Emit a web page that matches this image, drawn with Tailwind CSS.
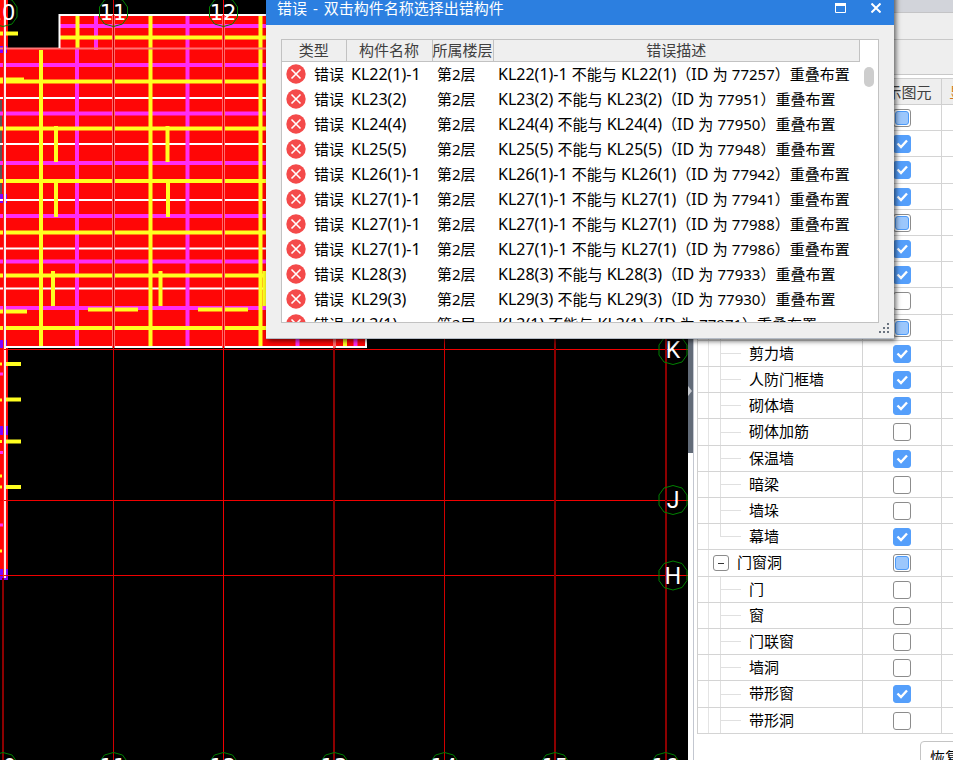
<!DOCTYPE html>
<html lang="zh-CN">
<head>
<meta charset="utf-8">
<title>错误</title>
<script src="https://cdn.jsdelivr.net/npm/@tailwindcss/browser@4"></script>
</head>
<body class="font-['Noto_Sans','Noto_Sans_CJK_SC',sans-serif] text-[15px] text-black">
<div class="relative flex h-screen w-full overflow-hidden bg-white">

  <main class="min-w-0 flex-1 bg-black">
    <svg class="block h-full w-full" viewBox="0 0 688 760" preserveAspectRatio="xMinYMin slice" fill="none" aria-label="轴网">
      <!-- slab -->
      <path fill="#ff0606" d="M0 0H8V48H59V14H367V348H8V580H0Z"/>
      <path fill="#5c5454" d="M0 100H2V194H0Z"/>
      <path fill="#8000ff" d="M0 46H7V53H0ZM0 194H7V203H0ZM0 340H7V348H0ZM0 426H8V435H0ZM0 569H8V580H0Z"/>
      <path stroke="#fff" stroke-width="2" d="M0 98H367M0 144H367M0 200H367M0 248.500H367M0 288.500H367"/>
      <path stroke="#ff2cf5" stroke-width="4" d="M59 26H367M0 65H367M0 113.500H367M0 163H367M0 216H367M0 261.500H367M0 308H367M96 14V50M77 49V347M187.500 14V347M297.500 15V347M355.500 15V347"/>
      <path stroke="#ffff20" stroke-width="4" d="M60 37.500H367M0 81.500H367M0 128.500H367M0 181H367M0 232.500H367M0 275.500H367M0 328H367M77.500 15V48M41 50V347M150.500 15V347M260.500 15V347M345 15V347"/>
      <path stroke="#ffff20" stroke-width="4" d="M56 126V162M167.500 126V162M56 182V217M168 182V217M53 271V306M160.500 271V306M264.500 271V306M0 79.500H24M0 33.500H18M0 311.500H27M88 309.500H138M198 309.500H248M5 364H21M5 399.500H21M5 441.500H21M5 487H21"/>
      <path stroke="#ff7474" stroke-width="2" d="M0 48.500H367"/>
      <path stroke="#fff" stroke-width="2" d="M59.500 48V15H367M5 347H366V15"/>
      <path stroke="#ff6a6a" stroke-width="3" d="M113.500 15V348M223.500 15V348M334.500 15V348"/>
      <path stroke="#ff2cf5" stroke-width="3" d="M0 374H5M0 452.500H5M0 525H5"/>
      <path stroke="#ffff20" stroke-width="3" d="M0 364H2M0 400H2M0 441.500H2M0 476H2M0 487H2M0 551H2"/>
      <path stroke="#ffe8e8" stroke-width="3" d="M4.500 0V578"/>
      <!-- axes -->
      <path stroke="#f00000" d="M0 349.500H688M0 500.500H688M0 575.500H688M223.500 0V760"/>
      <path stroke="#d00000" d="M113.500 0V760M444.500 0V760"/>
      <path stroke="#8c0000" stroke-width="2" d="M3 578V760M334 348V760M555 0V760M666 0V760"/>
      <path stroke="#ff2020" d="M3.500 0V578"/>
      <!-- axis bubbles -->
      <defs><path id="ring" stroke="#008000" d="M0-14.500 9-12 14-5 14 5 9 12 0 14.500-9 12-14 5-14-5-9-12Z"/></defs>
      <use href="#ring" x="3" y="12"/><use href="#ring" x="113.500" y="12"/><use href="#ring" x="223.500" y="12"/>
      <use href="#ring" x="673" y="350"/><use href="#ring" x="673" y="500"/><use href="#ring" x="673" y="575.500"/>
      <use href="#ring" x="3" y="767"/><use href="#ring" x="113.500" y="767"/><use href="#ring" x="223.500" y="767"/><use href="#ring" x="334.500" y="767"/><use href="#ring" x="444.500" y="767"/><use href="#ring" x="555" y="767"/><use href="#ring" x="665.500" y="767"/>
      <g class="font-['DejaVu_Sans',sans-serif]" fill="#fff" font-size="21" text-anchor="middle">
        <text x="2" y="20">10</text><text x="113" y="20">11</text><text x="223" y="20">12</text>
        <text x="3" y="774">10</text><text x="113" y="774">11</text><text x="223" y="774">12</text><text x="334" y="774">13</text><text x="444" y="774">14</text><text x="555" y="774">15</text><text x="665" y="774">16</text>
      </g>
      <g class="font-['Roboto',sans-serif]" fill="#fff" font-size="23" text-anchor="middle">
        <text x="673" y="358">K</text><text x="673" y="508">J</text><text x="673" y="584">H</text>
      </g>
    </svg>
  </main>

  <aside class="flex w-[265px] shrink-0 overflow-hidden">
    <div class="flex w-[6px] shrink-0 flex-col border-r border-[#c3c7d0]">
      <button aria-label="折叠" class="flex h-[453px] items-center bg-[#626b78] pt-[329px]">
        <svg class="h-[10px] w-[5px]" viewBox="0 0 5 10"><path d="M0 0 4 5 0 10Z" fill="#c9ccd2"/></svg>
      </button>
    </div>
    <div class="flex min-w-0 flex-1 flex-col">
      <div class="h-[13px] shrink-0 border-b border-[#c4c4c6] bg-[#d2d4da]"></div>
      <div class="h-[27px] shrink-0 border-b border-[#c8c8c8] bg-[#eee]"></div>
      <div class="h-[35px] shrink-0 border-b border-[#c8c8c8] bg-[#eee]"></div>
      <div class="ml-[3px] mt-[3px] flex min-h-0 flex-1 items-start border-b border-l border-[#cfcfcf]">
        <table class="w-[364px] shrink-0 table-fixed border-collapse">
          <colgroup><col class="w-[164px]"><col class="w-[79px]"><col class="w-[121px]"></colgroup>
          <thead>
            <tr class="h-[26px] bg-[#eee] text-[#404040]">
              <th class="border border-l-0 border-[#cfcfcf] p-0"></th>
              <th class="border border-[#cfcfcf] p-0 font-normal leading-[20px]">显示图元</th>
              <th class="border border-[#cfcfcf] p-0 pl-2 text-left font-normal leading-[20px] text-[#d07820]">显示</th>
            </tr>
          </thead>
          <tbody id="layers"></tbody>
        </table>
      </div>
      <footer class="flex h-[26px] shrink-0 pl-[226px] pt-[7px]">
        <button class="h-[32px] w-[120px] shrink-0 rounded border border-[#c4c4c4] bg-white pl-[9px] text-left leading-[30px]">恢复</button>
      </footer>
    </div>
  </aside>

  <section role="dialog" aria-labelledby="dlg-title" class="absolute -top-[10px] left-[266px] flex h-[349px] w-[628px] flex-col border-b border-[#b5bcc6] bg-[#efefef] shadow-[2px_2px_5px_rgba(0,0,0,0.6)]">
    <header class="flex h-[35px] shrink-0 items-center bg-[#2c7fe0] pl-[11px] text-white">
      <h1 id="dlg-title" class="flex-1 leading-[22px]">错误 <span class="mx-[2px]">-</span> 双击构件名称选择出错构件</h1>
      <button aria-label="最大化" class="flex h-[35px] w-[35px] items-center justify-center"><svg class="h-[10px] w-[11px]" viewBox="0 0 11 10"><path d="M.5 1.500H10.500M.5 1V9.500H10.500V1" fill="none" stroke="#fff"/><path d="M0 0H11V3H0Z" fill="#fff"/></svg></button>
      <button aria-label="关闭" class="flex h-[35px] w-[36px] items-center justify-center"><svg class="h-[10px] w-[10px]" viewBox="0 0 10 10"><path d="M.5.5 9.500 9.500M9.500.5.5 9.500" stroke="#fff" stroke-width="2"/></svg></button>
    </header>
    <div class="mx-[15px] mb-[15px] mt-[14px] flex min-h-0 flex-1 overflow-hidden border border-[#c2c2c2] bg-white">
      <div class="min-w-0 flex-1 overflow-hidden">
        <table class="w-full table-fixed border-collapse">
          <colgroup><col class="w-[64px]"><col class="w-[86px]"><col class="w-[61px]"><col></colgroup>
          <thead>
            <tr class="h-[21px] bg-[#efefef] leading-[20px] text-[#404040]">
              <th class="whitespace-nowrap border-b border-r border-[#c2c2c2] p-0 font-normal">类型</th>
              <th class="whitespace-nowrap border-b border-r border-[#c2c2c2] p-0 font-normal">构件名称</th>
              <th class="whitespace-nowrap border-b border-r border-[#c2c2c2] p-0 font-normal">所属楼层</th>
              <th class="whitespace-nowrap border-b border-r border-[#c2c2c2] p-0 font-normal">错误描述</th>
            </tr>
          </thead>
          <tbody id="errors"></tbody>
        </table>
      </div>
      <div class="flex w-[18px] shrink-0 justify-center pt-[27px]"><div class="h-[20px] w-[10px] rounded-full bg-[#cdcdcd]"></div></div>
    </div>
    <svg class="absolute bottom-[4px] right-[4px] h-[11px] w-[11px]" viewBox="0 0 11 11" fill="#6b7480"><path d="M8 0h2v2H8zM4 4h2v2H4zM8 4h2v2H8zM0 8h2v2H0zM4 8h2v2H4zM8 8h2v2H8z"/></svg>
  </section>
</div>

<script>
const errors = [
  ['KL22(1)-1','KL22(1)','77257'],['KL23(2)','KL23(2)','77951'],['KL24(4)','KL24(4)','77950'],
  ['KL25(5)','KL25(5)','77948'],['KL26(1)-1','KL26(1)','77942'],['KL27(1)-1','KL27(1)','77941'],
  ['KL27(1)-1','KL27(1)','77988'],['KL27(1)-1','KL27(1)','77986'],['KL28(3)','KL28(3)','77933'],
  ['KL29(3)','KL29(3)','77930'],['KL3(1)','KL3(1)','77971']
];
document.getElementById('errors').innerHTML = errors.map(([a, b, id]) => `
  <tr class="h-[25px] whitespace-nowrap leading-[24px]">
    <td class="p-0 pl-[4px]"><div class="flex h-[25px] items-center gap-[8px]">
      <svg class="h-[20px] w-[20px] shrink-0" viewBox="0 0 20 20"><circle cx="10" cy="10" r="9.7" fill="#f44a4a"/><path d="M5.500 5.500 14.500 14.500M14.500 5.500 5.500 14.500" stroke="#fff" stroke-width="1.6"/></svg><span>错误</span></div></td>
    <td class="p-0 pl-[5px] text-base leading-[24px]">${a}</td>
    <td class="p-0 pl-[5px]">第2层</td>
    <td class="p-0 pl-[5px]"><span class="text-base leading-[24px]">${a} </span>不能与<span class="text-base leading-[24px]"> ${b}</span>（<span class="text-base leading-[24px]">ID </span>为<span class="text-base leading-[24px]"> </span>${id}）重叠布置</td>
  </tr>`).join('');

// [name, state, level]; state: 0 off, 1 on, 2 mixed
const layers = [
  ['',2],['',1],['',1],['',1],['',2],['',1],['',1],['',0],['',2],
  ['剪力墙',1],['人防门框墙',1],['砌体墙',1],['砌体加筋',0],['保温墙',1],['暗梁',0],['墙垛',0],['幕墙',1,'last'],
  ['门窗洞',2,'group'],['门',0],['窗',0],['门联窗',0],['墙洞',0],['带形窗',1],['带形洞',0]
];
const marks = [
  '',
  '<svg class="pointer-events-none col-start-1 row-start-1 h-[18px] w-[18px]" viewBox="0 0 18 18"><path d="M4.500 8.500 8 12 14 5.500" fill="none" stroke="#fff" stroke-width="2.4"/></svg>',
  '<span class="pointer-events-none col-start-1 row-start-1 h-[14px] w-[14px] rounded-[3px] border border-[#4c9af8] bg-[#9cc7fc]"></span>'
];
document.getElementById('layers').innerHTML = layers.map(([name, s, kind], i) => `
  <tr>
    <td class="border-b border-r border-[#d4d4d4] p-0">
      <div class="${i % 5 === 2 ? 'flex h-[26px] items-stretch' : 'flex h-[25px] items-stretch'}">
        <span class="w-[11px] shrink-0 border-r border-[#e4e4e4]"></span>
        ${kind === 'group'
          ? `<span class="flex w-[28px] shrink-0 items-center pl-1"><button aria-label="折叠" class="flex h-[16px] w-[16px] items-center justify-center rounded-[3px] border border-[#8c8c8c] bg-white"><span class="h-px w-[6px] bg-[#333]"></span></button></span>`
          : `<span class="flex w-[12px] shrink-0 flex-col"><span class="h-1/2 border-r border-[#e0e0e0]"></span><span class="${kind === 'last' ? 'h-1/2' : 'h-1/2 border-r border-[#e0e0e0]'}"></span></span>
             <span class="flex w-[28px] shrink-0 items-center"><span class="h-px w-[20px] bg-[#e0e0e0]"></span></span>`}
        <label for="layer${i}" class="whitespace-nowrap leading-[25px]">${name}</label>
      </div>
    </td>
    <td class="border-b border-r border-[#d4d4d4] p-0">
      <div class="grid place-items-center">
        <input id="layer${i}" type="checkbox" aria-label="${name || '显示图元'}" ${s === 1 ? 'checked' : ''} class="col-start-1 row-start-1 h-[18px] w-[18px] appearance-none rounded-[3px] border border-[#8c8c8c] bg-white checked:border-[#559ffb] checked:bg-[#559ffb]">
        ${marks[s]}
      </div>
    </td>
    <td class="border-b border-[#d4d4d4] p-0"></td>
  </tr>`).join('');
document.querySelectorAll('#layers input').forEach((el, i) => { el.indeterminate = layers[i][1] === 2; });
</script>
</body>
</html>
